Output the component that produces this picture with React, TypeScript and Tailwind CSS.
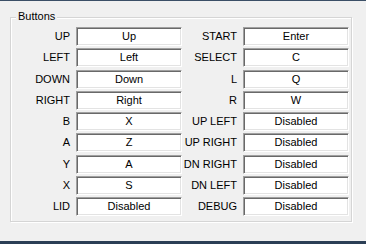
const LEFT: [string, string][] = [
  ['UP', 'Up'],
  ['LEFT', 'Left'],
  ['DOWN', 'Down'],
  ['RIGHT', 'Right'],
  ['B', 'X'],
  ['A', 'Z'],
  ['Y', 'A'],
  ['X', 'S'],
  ['LID', 'Disabled'],
];

const RIGHT: [string, string][] = [
  ['START', 'Enter'],
  ['SELECT', 'C'],
  ['L', 'Q'],
  ['R', 'W'],
  ['UP LEFT', 'Disabled'],
  ['UP RIGHT', 'Disabled'],
  ['DN RIGHT', 'Disabled'],
  ['DN LEFT', 'Disabled'],
  ['DEBUG', 'Disabled'],
];

function KeyBox({ value }: { value: string }) {
  return (
    <div className="w-[106px] h-[19px] bg-white border border-t-[#a0a0a0] border-l-[#a0a0a0] border-b-white border-r-white shadow-[inset_1px_1px_0_#696969,inset_-1px_-1px_0_#e3e3e3] flex items-center justify-center text-[#000] leading-none">
      {value}
    </div>
  );
}

function Column({ rows, labelWidth }: { rows: [string, string][]; labelWidth: string }) {
  return (
    <div className="flex flex-col">
      {rows.map(([label, value]) => (
        <div key={label} className="h-[21.25px] flex items-start">
          <div className={`${labelWidth} h-[19px] flex items-center justify-end pr-[2px] text-[#000] leading-none`}>
            {label}
          </div>
          <div className="ml-[4px]">
            <KeyBox value={value} />
          </div>
        </div>
      ))}
    </div>
  );
}

export default function App() {
  return (
    <div
      className="w-[366px] h-[244px] bg-[#f0f0f0] border-t border-t-[#3b4f66] border-b-[3px] border-b-[#2b3e55] text-[11px] overflow-hidden"
      style={{ fontFamily: '"Liberation Sans", Arial, sans-serif' }}
    >
      <div className="relative ml-[10px] mt-[16px] w-[342px] h-[205px] border border-[#d5d5d5] shadow-[inset_1px_1px_0_#fff,1px_1px_0_#fff]">
        <span className="absolute left-[5px] top-[-7px] px-[2px] bg-[#f0f0f0] leading-none text-[#000]">
          Buttons
        </span>
        <div className="flex pt-[9px]">
          <Column rows={LEFT} labelWidth="w-[61px]" />
          <Column rows={RIGHT} labelWidth="w-[57px]" />
        </div>
      </div>
    </div>
  );
}
